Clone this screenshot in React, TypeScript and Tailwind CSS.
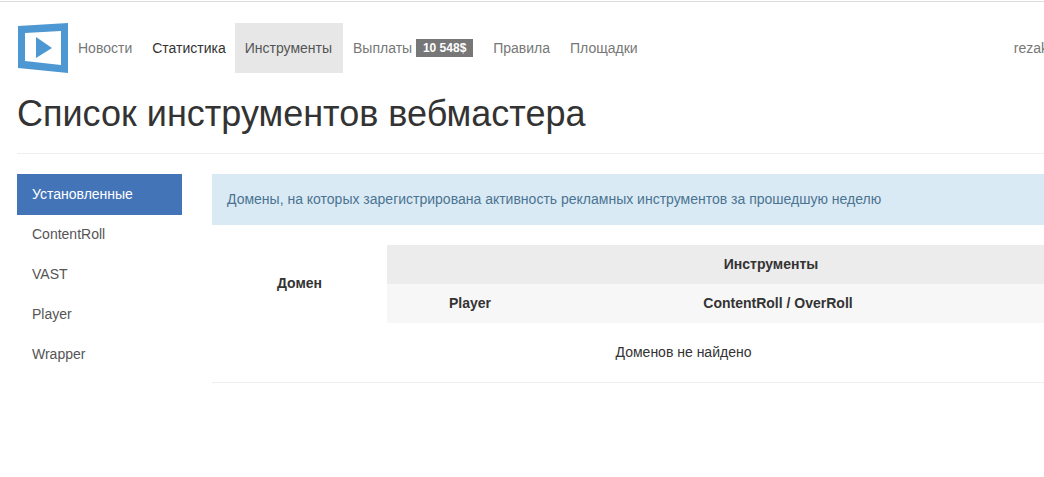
const navItems = [
  { label: "Новости", className: "px-[10px] text-[#777]" },
  { label: "Статистика", className: "px-[10px] text-[#333]" },
  { label: "Инструменты", className: "-ml-px pl-[10px] pr-[11px] text-[#555] bg-[#e7e7e7]" },
];

const sideItems = ["ContentRoll", "VAST", "Player", "Wrapper"];

function Logo() {
  return (
    <svg width="51" height="50" viewBox="0 0 51 50" className="shrink-0">
      <path
        fill="#4d98d3"
        fillRule="evenodd"
        d="M1 3 51 0V50L1 45ZM8 10V38L44 42V8Z"
      />
      <path fill="#4d98d3" d="M19 14 35 25 19 35Z" />
    </svg>
  );
}

export default function App() {
  return (
    <div className="h-[477px] w-[1044px] overflow-hidden bg-white pt-px font-['Liberation_Sans',Arial,sans-serif] text-[14px] leading-[20px] text-[#333]">
      <div className="w-[1300px] border-t border-[#ddd] pl-[17px] pt-[21px]">
        <nav className="flex h-[50px] w-[1031px] items-stretch">
          <Logo />
          <ul className="flex">
            {navItems.map((item) => (
              <li key={item.label} className={`flex items-center ${item.className}`}>
                {item.label}
              </li>
            ))}
            <li className="flex items-center px-[10px] text-[#777]">
              Выплаты
              <span className="ml-[4px] flex h-[18px] w-[57px] items-center justify-center bg-[#777] text-[12px] font-bold text-white">
                10 548$
              </span>
            </li>
            <li className="flex items-center px-[10px] text-[#777]">Правила</li>
            <li className="flex items-center px-[10px] text-[#777]">Площадки</li>
          </ul>
          <div className="ml-auto flex items-center text-[#777] whitespace-nowrap">rezak</div>
        </nav>

        <h1 className="mt-[21px] w-[1140px] border-b border-[#eee] pb-[19px] text-[36px] leading-[40px] font-normal text-[#333]">
          Список инструментов вебмастера
        </h1>

        <div className="mt-[20px] flex w-[1140px] gap-[30px]">
          <ul className="w-[165px] shrink-0">
            <li className="flex h-[41px] items-center bg-[#4374b7] px-[15px] pb-[2px] text-white">
              Установленные
            </li>
            {sideItems.map((item) => (
              <li key={item} className="flex h-[40px] items-center px-[15px] pb-[2px] text-[#555]">
                {item}
              </li>
            ))}
          </ul>

          <div className="w-[943px]">
            <div className="flex h-[51px] items-center bg-[#daeaf5] pb-[2px] pl-[15px] text-[#4a7491]">
              Домены, на которых зарегистрирована активность рекламных инструментов за прошедшую неделю
            </div>
            <table className="mt-[20px] w-[943px] table-fixed border-collapse">
              <colgroup>
                <col className="w-[175px]" />
                <col className="w-[166px]" />
                <col className="w-[450px]" />
                <col className="w-[152px]" />
              </colgroup>
              <thead>
                <tr className="h-[39px]">
                  <th rowSpan={2} className="pb-[2px] text-center font-bold">Домен</th>
                  <th colSpan={3} className="bg-[#ececec] pb-[2px] text-center font-bold">Инструменты</th>
                </tr>
                <tr className="h-[39px] bg-[#f7f7f7]">
                  <th className="pb-[2px] text-center font-bold">Player</th>
                  <th className="pb-[2px] text-center font-bold">ContentRoll / OverRoll</th>
                  <th></th>
                </tr>
              </thead>
              <tbody>
                <tr className="h-[59px] border-b border-[#eee]">
                  <td colSpan={4} className="text-center">Доменов не найдено</td>
                </tr>
              </tbody>
            </table>
          </div>
        </div>
      </div>
    </div>
  );
}
